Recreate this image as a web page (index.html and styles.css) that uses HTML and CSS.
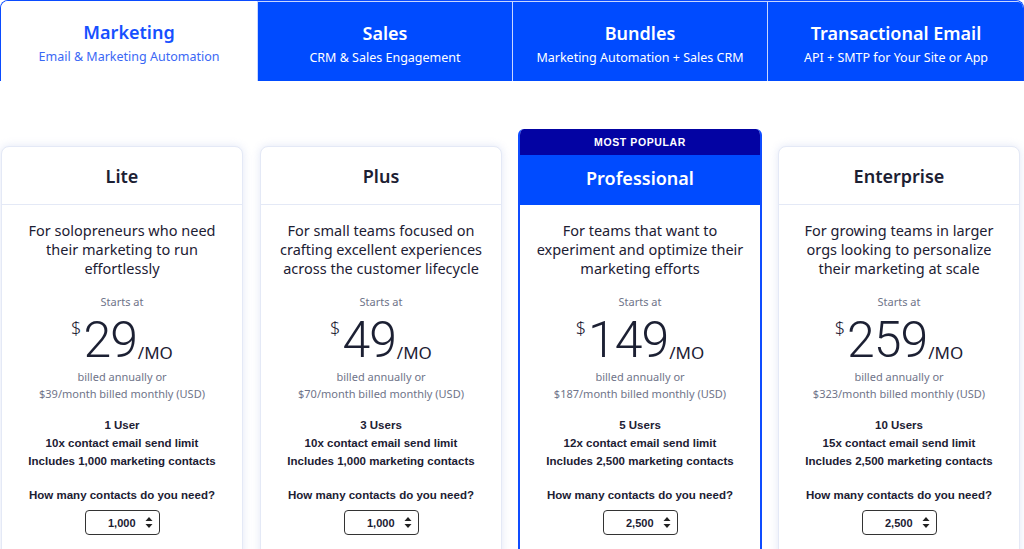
FILE: index.html
```html
<!DOCTYPE html>
<html>
<head>
<meta charset="utf-8">
<link rel="stylesheet" href="styles.css">
</head>
<body>
<nav class="tabs">
  <div class="tab active"><div class="tab-title">Marketing</div><div class="tab-sub">Email &amp; Marketing Automation</div></div>
  <div class="tab"><div class="tab-title">Sales</div><div class="tab-sub">CRM &amp; Sales Engagement</div></div>
  <div class="tab"><div class="tab-title">Bundles</div><div class="tab-sub">Marketing Automation + Sales CRM</div></div>
  <div class="tab last"><div class="tab-title">Transactional Email</div><div class="tab-sub">API + SMTP for Your Site or App</div></div>
</nav>

<main class="plans">
  <section class="card">
    <header class="card-head"><h2>Lite</h2></header>
    <div class="card-body">
      <p class="desc">For solopreneurs who need their marketing to run effortlessly</p>
      <div class="starts">Starts at</div>
      <div class="price"><span class="cur">$</span><span class="amt">29</span><span class="per">/MO</span></div>
      <div class="billed">billed annually or<br>$39/month billed monthly (USD)</div>
      <ul class="feat"><li>1 User</li><li>10x contact email send limit</li><li>Includes 1,000 marketing contacts</li></ul>
      <div class="q">How many contacts do you need?</div>
      <div class="sel"><span>1,000</span><svg width="8" height="13" viewBox="0 0 8 13"><path d="M0.5 5 L4 1 L7.5 5 Z M0.5 8 L4 12 L7.5 8 Z" fill="#222"/></svg></div>
    </div>
  </section>

  <section class="card">
    <header class="card-head"><h2>Plus</h2></header>
    <div class="card-body">
      <p class="desc">For small teams focused on crafting excellent experiences across the customer lifecycle</p>
      <div class="starts">Starts at</div>
      <div class="price"><span class="cur">$</span><span class="amt">49</span><span class="per">/MO</span></div>
      <div class="billed">billed annually or<br>$70/month billed monthly (USD)</div>
      <ul class="feat"><li>3 Users</li><li>10x contact email send limit</li><li>Includes 1,000 marketing contacts</li></ul>
      <div class="q">How many contacts do you need?</div>
      <div class="sel"><span>1,000</span><svg width="8" height="13" viewBox="0 0 8 13"><path d="M0.5 5 L4 1 L7.5 5 Z M0.5 8 L4 12 L7.5 8 Z" fill="#222"/></svg></div>
    </div>
  </section>

  <section class="card popular">
    <div class="badge">MOST POPULAR</div>
    <header class="card-head"><h2>Professional</h2></header>
    <div class="card-body">
      <p class="desc">For teams that want to experiment and optimize their marketing efforts</p>
      <div class="starts">Starts at</div>
      <div class="price"><span class="cur">$</span><span class="amt">149</span><span class="per">/MO</span></div>
      <div class="billed">billed annually or<br>$187/month billed monthly (USD)</div>
      <ul class="feat"><li>5 Users</li><li>12x contact email send limit</li><li>Includes 2,500 marketing contacts</li></ul>
      <div class="q">How many contacts do you need?</div>
      <div class="sel"><span>2,500</span><svg width="8" height="13" viewBox="0 0 8 13"><path d="M0.5 5 L4 1 L7.5 5 Z M0.5 8 L4 12 L7.5 8 Z" fill="#222"/></svg></div>
    </div>
  </section>

  <section class="card">
    <header class="card-head"><h2>Enterprise</h2></header>
    <div class="card-body">
      <p class="desc">For growing teams in larger orgs looking to personalize their marketing at scale</p>
      <div class="starts">Starts at</div>
      <div class="price"><span class="cur">$</span><span class="amt">259</span><span class="per">/MO</span></div>
      <div class="billed">billed annually or<br>$323/month billed monthly (USD)</div>
      <ul class="feat"><li>10 Users</li><li>15x contact email send limit</li><li>Includes 2,500 marketing contacts</li></ul>
      <div class="q">How many contacts do you need?</div>
      <div class="sel"><span>2,500</span><svg width="8" height="13" viewBox="0 0 8 13"><path d="M0.5 5 L4 1 L7.5 5 Z M0.5 8 L4 12 L7.5 8 Z" fill="#222"/></svg></div>
    </div>
  </section>
</main>
</body>
</html>
```

FILE: styles.css
```css
* { box-sizing: border-box; }
html, body { margin: 0; padding: 0; background: #fff; overflow: hidden; }
body { font-family: "Noto Sans", "Open Sans", sans-serif; color: #1c2033; width: 1024px; height: 549px; }

.tabs {
  display: grid;
  grid-template-columns: 256px 255px 255px 258px;
  height: 81px;
  border: 1px solid #0a4bff;
  border-bottom: none;
  border-radius: 8px 8px 0 0;
  overflow: hidden;
}
.tab {
  background: #004bff;
  color: #fff;
  display: flex;
  flex-direction: column;
  align-items: center;
  justify-content: center;
  border-left: 1px solid #c9d6ff;
  border-top: 1px solid #c9d6ff;
  padding-top: 4px;
}
.tab.last { border-right: 1px solid #c9d6ff; border-top-right-radius: 7px; }
.tab.active { background: #fff; color: #1650ff; border: none; }
.tab-title { font-size: 18px; font-weight: 600; line-height: 22px; }
.tab-sub { font-size: 12.5px; line-height: 17px; margin-top: 5px; }
.tab.active .tab-sub { color: #3b68f5; }

.plans {
  display: grid;
  grid-template-columns: repeat(4, 242px);
  column-gap: 17px;
  padding: 48px 0 0 1px;
  align-items: start;
}
.card {
  margin-top: 17px;
  border: 1px solid #e4e9f6;
  border-radius: 8px 8px 0 0;
  background: #fff;
  box-shadow: 0 0 8px rgba(190, 202, 235, 0.45);
  height: 420px;
}
.card-head {
  height: 58px;
  display: flex;
  align-items: center;
  justify-content: center;
  border-bottom: 1px solid #e4e9f6;
}
.card-head h2 { margin: 0; font-size: 18px; font-weight: 600; color: #1c2033; }
.card-body { text-align: center; padding: 16px 12px 0; }
.desc { margin: 0 auto; font-size: 14.5px; line-height: 19px; color: #1c2033; }
.starts { margin-top: 17px; font-size: 11px; color: #6f7489; line-height: 14px; }
.price { display: flex; justify-content: center; align-items: flex-start; margin-top: 6px; height: 53px; }
.cur { font-size: 18px; font-weight: 300; line-height: 20px; margin-top: 3px; margin-right: 2px; }
.amt { font-family: Roboto, "Noto Sans", sans-serif; font-size: 50px; font-weight: 300; line-height: 48px; letter-spacing: -1px; margin-top: 1px; }
.per { font-size: 17px; line-height: 20px; align-self: flex-end; margin-bottom: 5px; margin-left: 1px; }
.billed { font-size: 11px; line-height: 17px; color: #6f7489; }
.feat { list-style: none; margin: 14px 0 0; padding: 0; font-family: "Liberation Sans", Arial, sans-serif; font-weight: 700; font-size: 11.5px; line-height: 18px; color: #1c2033; }
.q { margin-top: 18px; font-family: "Liberation Sans", Arial, sans-serif; font-weight: 700; font-size: 11.5px; color: #1c2033; line-height: 14px; }
.sel {
  width: 75px; height: 25px; margin: 8px auto 0;
  border: 1px solid #333; border-radius: 4px;
  display: flex; align-items: center; justify-content: flex-end; gap: 9px;
  padding-right: 6px;
  font-size: 11px; font-family: "Liberation Sans", Arial, sans-serif; font-weight: 700;
}

.card.popular {
  margin-top: 0;
  border: 2px solid #0f4cff;
  border-top: none;
  margin-left: -1px;
  margin-right: -1px;
  border-radius: 6px 6px 0 0;
  overflow: hidden;
  box-shadow: none;
  height: 440px;
}
.badge {
  height: 26px; background: #0303a3; color: #fff;
  font-family: "Liberation Sans", Arial, sans-serif; font-weight: 700; font-size: 10.5px; letter-spacing: 0.6px;
  display: flex; align-items: center; justify-content: center;
}
.popular .card-head { height: 50px; background: #004bff; border-bottom: none; padding-bottom: 5px; }
.popular .card-head h2 { color: #fff; }
```
